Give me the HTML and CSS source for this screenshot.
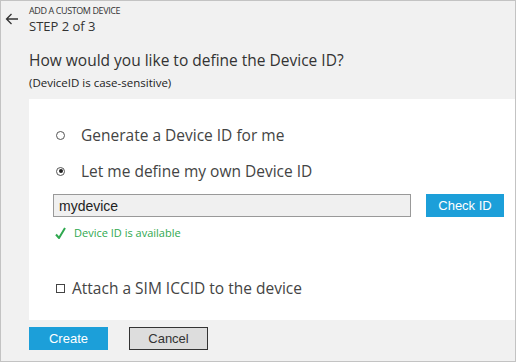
FILE: index.html
```html
<!DOCTYPE html>
<html lang="en">
<head>
  <meta charset="utf-8">
  <title>Add a custom device</title>
  <link rel="stylesheet" href="styles.css">
</head>
<body>
  <div class="frame">
    <header class="header">
      <button class="back" aria-label="Back">
        <svg width="14" height="12" viewBox="0 0 14 12"><path d="M13 6H1.5M6.5 1L1.5 6l5 5" fill="none" stroke="#333" stroke-width="1.3"/></svg>
      </button>
      <div class="titles">
        <div class="caption">ADD A CUSTOM DEVICE</div>
        <div class="step">STEP 2 of 3</div>
      </div>
    </header>

    <h1 class="question">How would you like to define the Device ID?</h1>
    <p class="note">(DeviceID is case-sensitive)</p>

    <section class="panel">
      <label class="option">
        <span class="radio"></span>
        Generate a Device ID for me
      </label>
      <label class="option">
        <span class="radio checked"></span>
        Let me define my own Device ID
      </label>

      <div class="id-row">
        <input class="id-input" type="text" value="mydevice">
        <button class="btn primary">Check ID</button>
      </div>
      <div class="status">
        <svg width="11" height="12" viewBox="0 0 11 12"><path d="M1 7.5l3 3.5L10 1" fill="none" stroke="#2fa84f" stroke-width="2"/></svg>
        Device ID is available
      </div>

      <label class="option sim">
        <span class="box"></span>
        Attach a SIM ICCID to the device
      </label>
    </section>

    <footer class="actions">
      <button class="btn primary">Create</button>
      <button class="btn secondary">Cancel</button>
    </footer>
  </div>
</body>
</html>
```

FILE: styles.css
```css
*, *::before, *::after {
  margin: 0;
  padding: 0;
  box-sizing: border-box;
}

body {
  width: 516px;
  height: 363px;
  background-color: #ffffff;
  color: #333333;
  font-family: "Open Sans", sans-serif;
}

.frame {
  height: 362px;
  border: 1px solid #c3c3c3;
  background-color: #f1f1f1;
  padding-left: 28px;
}

.header {
  position: relative;
  padding-top: 4px;
  height: 40px;
}

.back {
  position: absolute;
  left: -24px;
  top: 12px;
  border: none;
  background: none;
  display: flex;
}

.caption {
  font-size: 9px;
  letter-spacing: -0.4px;
  line-height: 12px;
  color: #333333;
}

.step {
  font-size: 13px;
  line-height: 18px;
  color: #333333;
}

.question {
  margin-top: 8px;
  font-size: 15.5px;
  font-weight: 400;
  line-height: 22px;
  color: #333333;
}

.note {
  margin-top: 3px;
  font-size: 11.5px;
  line-height: 18px;
  color: #222222;
}

.panel {
  margin-top: 7px;
  height: 221px;
  background-color: #ffffff;
  padding: 25px 0 0 24px;
}

.option {
  display: flex;
  align-items: center;
  height: 22px;
  font-size: 15.5px;
  color: #444444;
}

.option + .option {
  margin-top: 14px;
}

.radio {
  width: 9px;
  height: 9px;
  margin: 0 16px 0 3px;
  border: 1px solid #555555;
  border-radius: 50%;
  position: relative;
}

.radio.checked::after {
  content: "";
  position: absolute;
  top: 1.5px;
  left: 1.5px;
  width: 4px;
  height: 4px;
  border-radius: 50%;
  background-color: #222222;
}

.id-row {
  display: flex;
  margin-top: 12px;
}

.id-input {
  width: 358px;
  height: 23px;
  border: 1px solid #999999;
  background-color: #f0f0f0;
  padding: 0 5px;
  font-family: "Liberation Sans", Arial, sans-serif;
  font-size: 14px;
  color: #222222;
}

.btn {
  width: 79px;
  height: 23px;
  border: none;
  font-family: "Liberation Sans", Arial, sans-serif;
  font-size: 13px;
}

.btn.primary {
  background-color: #1c9fd9;
  color: #ffffff;
}

.btn.secondary {
  border: 1px solid #333333;
  background-color: #dddddd;
  color: #333333;
}

.id-row .btn {
  width: 78px;
  margin-left: 15px;
}

.status {
  display: flex;
  align-items: center;
  gap: 8px;
  margin-top: 8px;
  padding-left: 2px;
  font-size: 11px;
  color: #2fa84f;
}

.option.sim {
  margin-top: 37px;
}

.box {
  width: 9px;
  height: 9px;
  margin: 0 7px 0 3px;
  border: 1px solid #444444;
}

.actions {
  display: flex;
  gap: 21px;
  margin-top: 7px;
}
```
